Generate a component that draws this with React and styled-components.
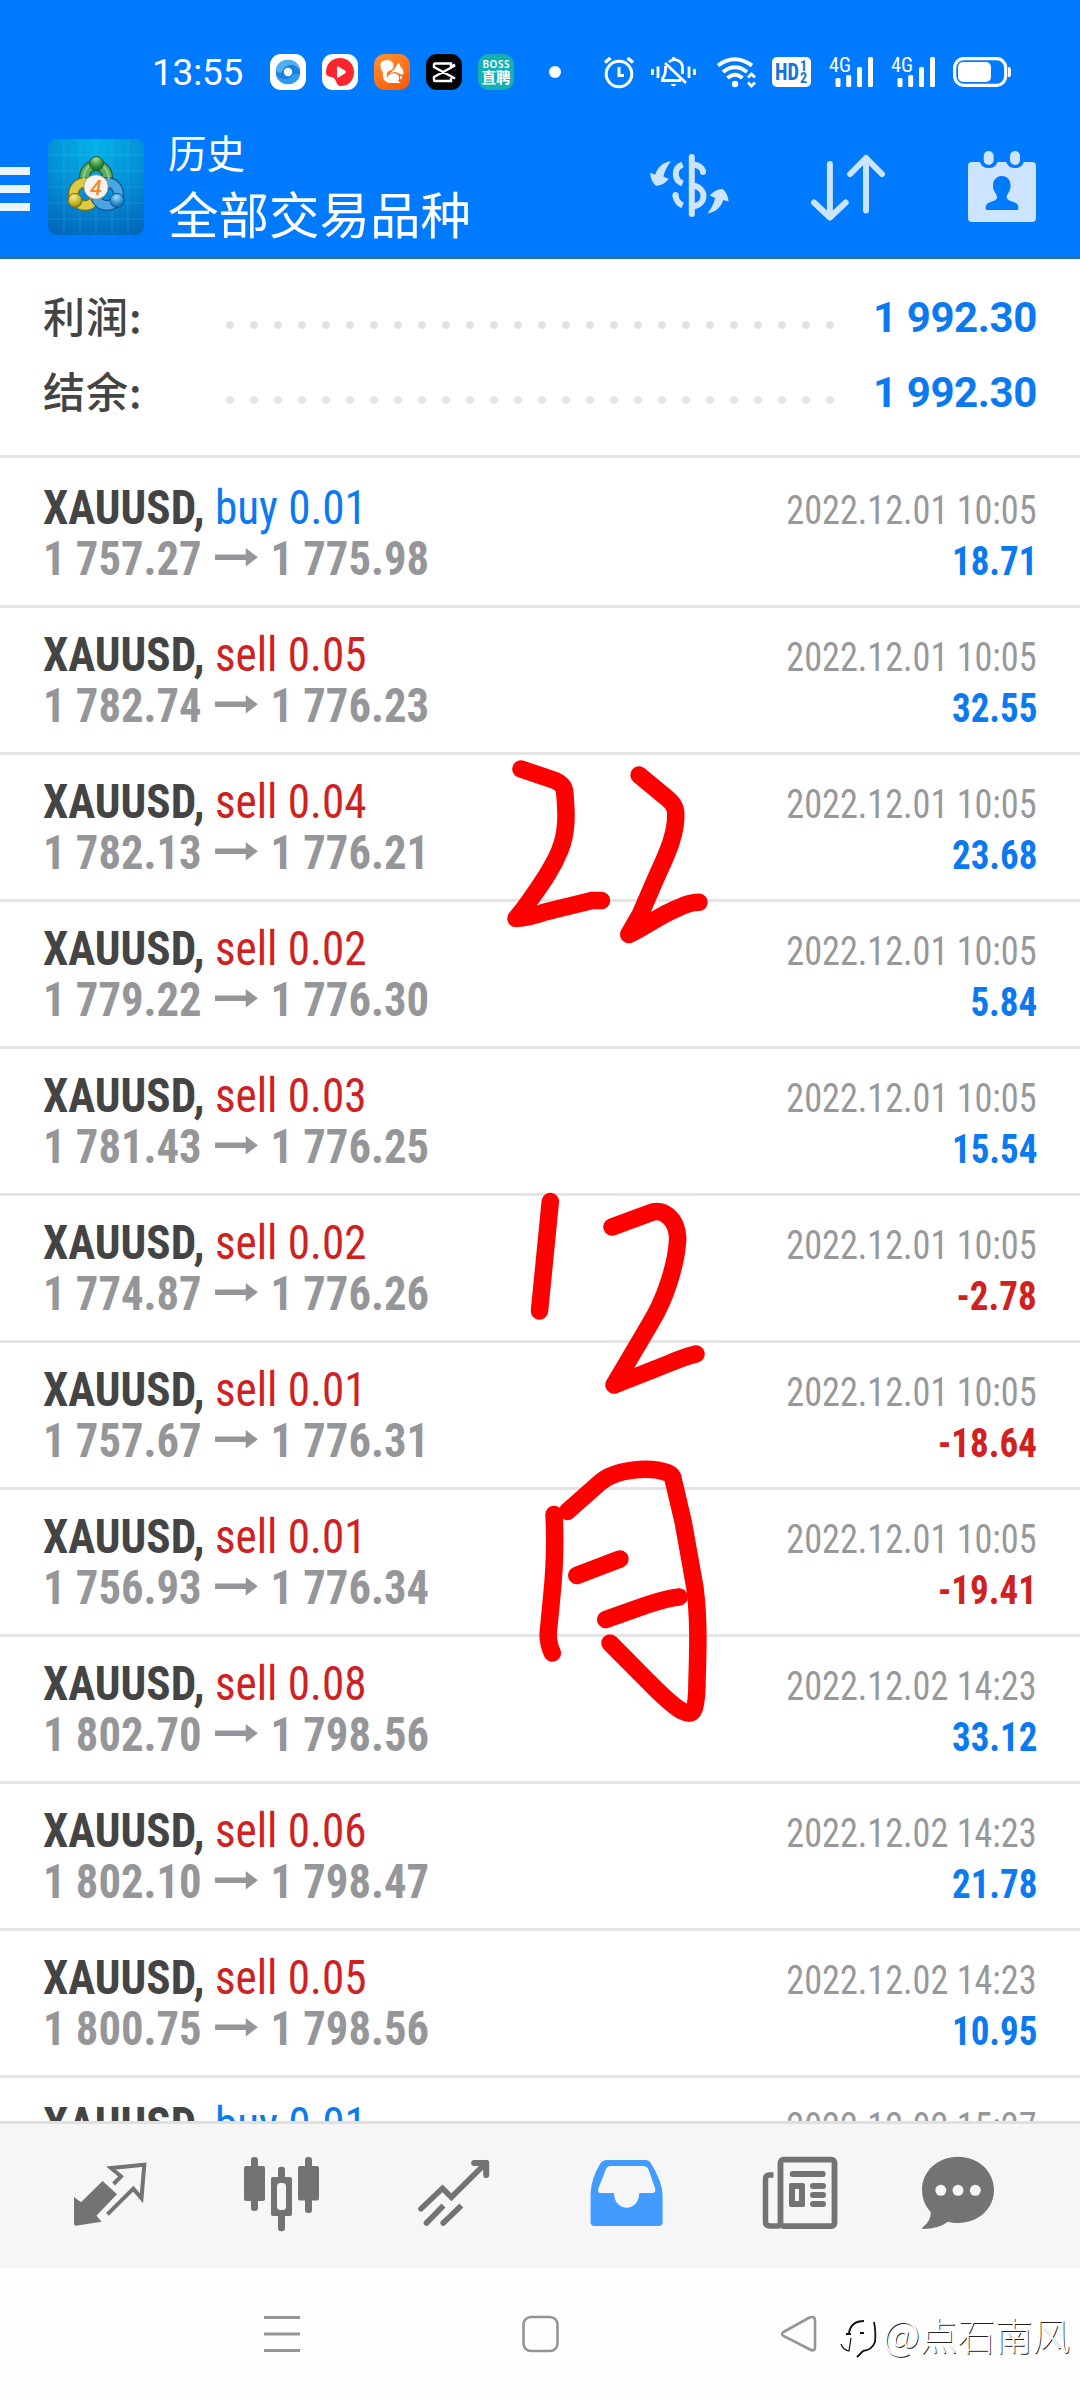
import React from 'react'
import styled, { createGlobalStyle } from 'styled-components'

const GlobalStyle = createGlobalStyle`
  * {
    box-sizing: border-box;
  }
  body {
    margin: 0;
    background: #fff;
  }
  svg {
    display: block;
    overflow: visible;
    flex: none;
  }
`
const Screen = styled.div`
  position: relative;
  display: flex;
  flex-direction: column;
  width: 1080px;
  height: 2400px;
  overflow: hidden;
  background: #fff;
  font-family: "Roboto Condensed", Roboto, "Noto Sans CJK SC", sans-serif;
`
const Header = styled.header`
  flex: none;
  height: 259px;
  background: #007aff;
  border-bottom: 3px solid #1b6fc6;
  color: #fff;
`
const StatusBar = styled.div`
  display: flex;
  align-items: flex-start;
  height: 118px;
  padding: 54px 0 0 152px;
`
const Clock = styled.span`
  width: 118px;
  font-family: Roboto, sans-serif;
  font-size: 37px;
  font-weight: 400;
  line-height: 37px;
  letter-spacing: -0.2px;
`
const AppIcons = styled.div`
  display: flex;
  gap: 16px;
`
const StatusIcon = styled.svg`
  margin-left: ${(props) => props.$gap}px;
`
const Toolbar = styled.div`
  display: flex;
  align-items: center;
  height: 138px;
`
const Menu = styled.div`
  display: flex;
  flex-direction: column;
  gap: 10px;
  width: 30px;
  margin: 4px 18px 0 0;
`
const MenuBar = styled.span`
  height: 8px;
  background: #e9f5ff;
`
const Titles = styled.div`
  flex: 1;
  margin-left: 24px;
  font-family: "Noto Sans CJK SC", sans-serif;
  font-weight: 400;
`
const SmallTitle = styled.div`
  font-size: 38.5px;
  line-height: 50px;
`
const BigTitle = styled.div`
  font-size: 50.5px;
  line-height: 72px;
`
const Actions = styled.div`
  display: flex;
  align-items: center;
  gap: 80.5px;
  margin-right: 42px;
`
const Summary = styled.section`
  flex: none;
  height: 199px;
  padding: 21px 43px 0;
  border-bottom: 3px solid #e4e4e4;
`
const SummaryRow = styled.div`
  display: flex;
  align-items: center;
  height: 75px;
`
const SummaryLabel = styled.span`
  width: 183px;
  padding-bottom: 6px;
  color: #444;
  font-family: "Noto Sans CJK SC", sans-serif;
  font-size: 42px;
  font-weight: 500;
  line-height: 75px;
  letter-spacing: 1px;
`
const Dots = styled.span`
  width: 624px;
  height: 8px;
  margin-top: 14px;
  margin-left: -8px;
  background: radial-gradient(circle at center, #e4e4e4 3.6px, transparent 4.2px) 0 0 / 24px 8px repeat-x;
`
const SummaryValue = styled.span`
  flex: 1;
  color: #0b79f0;
  font-family: Roboto, sans-serif;
  font-size: 42px;
  font-weight: 700;
  text-align: right;
  letter-spacing: -0.4px;
`
const Deals = styled.main`
  flex: none;
  height: 1663px;
  overflow: hidden;
`
const Deal = styled.div`
  height: 147px;
  padding: 21px 43px 0;
  border-top: 3px solid #e4e4e4;
  &:first-child {
    border-top-color: transparent;
  }
`
const Line = styled.div`
  display: flex;
  align-items: baseline;
  justify-content: space-between;
  height: 51px;
  line-height: 51px;
  white-space: pre;
`
const Order = styled.span`
  transform: scaleX(0.94);
  transform-origin: left;
  font-size: 48px;
`
const Symbol = styled.span`
  color: #444;
  font-weight: 700;
`
const Side = styled.span`
  color: ${(props) => (props.$buy ? '#0b79f0' : '#d0201f')};
  font-weight: 400;
`
const Prices = styled.span`
  display: flex;
  align-items: baseline;
  transform: scaleX(0.93);
  transform-origin: left;
  color: #959699;
  font-size: 48px;
  font-weight: 700;
`
const PriceArrow = styled.svg`
  margin: 0 14px;
`
const Time = styled.span`
  transform: scaleX(0.905);
  transform-origin: right;
  color: #97989b;
  font-size: 40px;
  font-weight: 400;
`
const Profit = styled.span`
  transform: scaleX(0.925);
  transform-origin: right;
  color: ${(props) => (props.$loss ? '#d0201f' : '#0b79f0')};
  font-size: 40px;
  font-weight: 700;
`
const Tabs = styled.nav`
  display: flex;
  flex: none;
  height: 147px;
  padding: 32px 0 0 24px;
  background: #f6f6f6;
  border-top: 3px solid #e0e0e0;
`
const Tab = styled.div`
  display: flex;
  justify-content: center;
  width: ${(props) => props.$width || 172}px;
  color: ${(props) => (props.$active ? '#429bff' : '#737373')};
`
const SystemNav = styled.div`
  display: flex;
  flex: 1;
  justify-content: center;
  align-items: center;
  gap: 222px;
  background: #fefefe;
`
const Marker = styled.svg`
  position: absolute;
  left: 500px;
  top: 750px;
`
const Watermark = styled.div`
  position: absolute;
  right: 10px;
  bottom: 36px;
  display: flex;
  align-items: center;
  gap: 3px;
  color: #fff;
  font-family: "Noto Sans CJK SC", sans-serif;
  font-size: 37.5px;
  font-weight: 300;
  line-height: 60px;
  text-shadow: 0.8px 0.8px 0.6px #222;
`
const WatermarkLogo = styled.svg`
  margin-top: 10px;
`
const At = styled.span`
  font-size: 41px;
`

const deals = [
  { side: 'buy 0.01', open: '1 757.27', close: '1 775.98', time: '2022.12.01 10:05', profit: '18.71' },
  { side: 'sell 0.05', open: '1 782.74', close: '1 776.23', time: '2022.12.01 10:05', profit: '32.55' },
  { side: 'sell 0.04', open: '1 782.13', close: '1 776.21', time: '2022.12.01 10:05', profit: '23.68' },
  { side: 'sell 0.02', open: '1 779.22', close: '1 776.30', time: '2022.12.01 10:05', profit: '5.84' },
  { side: 'sell 0.03', open: '1 781.43', close: '1 776.25', time: '2022.12.01 10:05', profit: '15.54' },
  { side: 'sell 0.02', open: '1 774.87', close: '1 776.26', time: '2022.12.01 10:05', profit: '-2.78' },
  { side: 'sell 0.01', open: '1 757.67', close: '1 776.31', time: '2022.12.01 10:05', profit: '-18.64' },
  { side: 'sell 0.01', open: '1 756.93', close: '1 776.34', time: '2022.12.01 10:05', profit: '-19.41' },
  { side: 'sell 0.08', open: '1 802.70', close: '1 798.56', time: '2022.12.02 14:23', profit: '33.12' },
  { side: 'sell 0.06', open: '1 802.10', close: '1 798.47', time: '2022.12.02 14:23', profit: '21.78' },
  { side: 'sell 0.05', open: '1 800.75', close: '1 798.56', time: '2022.12.02 14:23', profit: '10.95' },
  { side: 'buy 0.01', open: '', close: '', time: '2022.12.02 15:27', profit: '' },
]

const BrowserIcon = () => (
  <svg width="36" height="36" viewBox="0 0 36 36">
    <rect width="36" height="36" rx="11" fill="#fff" />
    <circle cx="18" cy="18" r="12.200" fill="#1a7fe0" />
    <path d="M6 16C8 3 27 2 30 16C24 8 16 10 13 16C11 20 8 20 6 16Z" fill="#4fb0f5" />
    <path d="M30 20C28 32 10 34 6 21C12 27 20 26 23 20Z" fill="#2f9bee" />
    <circle cx="18" cy="18" r="4.200" fill="#fff" />
  </svg>
)
const VideoIcon = () => (
  <svg width="36" height="36" viewBox="0 0 36 36">
    <rect width="36" height="36" rx="11" fill="#fff" />
    <path d="M18 4C26 4 32 10 32 18C32 26 27 32 19 32C14 32 15 27 12 24C9 22 4 24 4 18C4 10 10 4 18 4Z" fill="#fb2530" />
    <path d="M15 13.500Q15 12 16.500 12.500L23.500 17Q24.800 18 23.500 19L16.500 23.500Q15 24 15 22.500Z" fill="#fff" />
  </svg>
)
const SquirrelIcon = () => (
  <svg width="36" height="36" viewBox="0 0 36 36">
    <defs>
      <linearGradient id="orange" x1="0" y1="0" x2="0.6" y2="1">
        <stop offset="0" stopColor="#ff9433" />
        <stop offset="1" stopColor="#ff5d0a" />
      </linearGradient>
    </defs>
    <rect width="36" height="36" rx="11" fill="url(#orange)" />
    <path d="M7 14C5 8 10 6 13 6C18 6 21 10 19 14C18 17 13 16 13 20C12 24 14 26 16 29C10 28 8 24 9 18C8 17 7 16 7 14Z" fill="#fff" />
    <path d="M16 19C19 17 21 15 24 9Q26 9 26 12Q30 16 29.500 20C27 22 24 18 21 18Z" fill="#fff" />
    <path d="M13 25C13 20 20 18 24 21C26 23 25 26 24 27L27 29H18C15 29 13 28 13 25Z" fill="#fff" />
    <rect x="26" y="22" width="2" height="3" fill="#fff" />
  </svg>
)
const CutIcon = () => (
  <svg width="36" height="36" viewBox="0 0 36 36">
    <rect width="36" height="36" rx="11" fill="#050505" />
    <path
      d="M29 10.500L25 12.500V9.500H9Q8 9.500 8 11V13L29 24.500M29 11.500L8 23V25.500Q8 27 9 27H25V24"
      fill="none"
      stroke="#fff"
      strokeWidth="2.400"
    />
  </svg>
)
const BossIcon = () => (
  <svg width="36" height="36" viewBox="0 0 36 36">
    <rect width="36" height="36" rx="11" fill="#15b0b4" />
    <text x="18" y="13.500" textAnchor="middle" fontFamily="Noto Sans" fontSize="10" fontWeight="600" fill="#fff" textLength="27">
      BOSS
    </text>
    <text x="18" y="29" textAnchor="middle" fontFamily="Noto Sans CJK SC" fontSize="14.500" fontWeight="700" fill="#fff">
      直聘
    </text>
  </svg>
)
const Signal = () => (
  <StatusIcon $gap={18} width="44" height="36" viewBox="0 0 44 36" fill="#fff">
    <text x="0" y="18" fontFamily="Roboto Condensed" fontSize="20.500" fontWeight="400" textLength="22" lengthAdjust="spacingAndGlyphs">
      4G
    </text>
    <rect x="6.500" y="24" width="5" height="9" rx="1.500" />
    <rect x="17.200" y="21" width="5" height="12" rx="1.500" />
    <rect x="28" y="13" width="5" height="20" rx="1.500" />
    <rect x="39" y="3" width="5" height="30" rx="1.500" />
  </StatusIcon>
)
const Logo = () => (
  <svg width="96" height="96" viewBox="0 0 96 96">
    <defs>
      <radialGradient id="sky" cx="0.5" cy="0.05" r="1">
        <stop offset="0" stopColor="#05b2ea" />
        <stop offset="0.5" stopColor="#0291d6" />
        <stop offset="1" stopColor="#0268bd" />
      </radialGradient>
      <radialGradient id="greenHead" cx="0.45" cy="0.2" r="0.8">
        <stop offset="0" stopColor="#a5dba0" />
        <stop offset="0.6" stopColor="#34943c" />
        <stop offset="1" stopColor="#176a28" />
      </radialGradient>
      <radialGradient id="yellowHead" cx="0.4" cy="0.25" r="0.8">
        <stop offset="0" stopColor="#f6ee8a" />
        <stop offset="0.6" stopColor="#c6b32b" />
        <stop offset="1" stopColor="#85781a" />
      </radialGradient>
      <radialGradient id="blueHead" cx="0.45" cy="0.25" r="0.8">
        <stop offset="0" stopColor="#a4dcf8" />
        <stop offset="0.6" stopColor="#2c8ed4" />
        <stop offset="1" stopColor="#125b9c" />
      </radialGradient>
    </defs>
    <rect width="96" height="96" rx="8" fill="url(#sky)" />
    <path
      d="M16 0V96M32 0V96M48 0V96M64 0V96M80 0V96M0 16H96M0 32H96M0 48H96M0 64H96M0 80H96"
      stroke="#6fd0f5"
      strokeOpacity="0.2"
    />
    <g fill="none">
      <circle cx="48" cy="38" r="11.500" stroke="#1c5d2b" strokeWidth="11" />
      <circle cx="48" cy="38" r="11.500" stroke="#5fae5f" strokeWidth="8.500" />
      <circle cx="37" cy="55" r="11.500" stroke="#6f6b16" strokeWidth="11" />
      <circle cx="37" cy="55" r="11.500" stroke="#dccb45" strokeWidth="8.500" />
      <circle cx="59" cy="55" r="11.500" stroke="#10528c" strokeWidth="11" />
      <circle cx="59" cy="55" r="11.500" stroke="#4aa5e0" strokeWidth="8.500" />
      <path d="M35.500 40Q36.500 26 48 24.500Q59.500 26 61 40" stroke="#8fce8b" strokeWidth="2" />
    </g>
    <circle cx="48.500" cy="24.500" r="7" fill="url(#greenHead)" stroke="#1c5d2b" />
    <circle cx="27" cy="61.500" r="7" fill="url(#yellowHead)" stroke="#6f6b16" />
    <circle cx="69" cy="61.500" r="7" fill="url(#blueHead)" stroke="#10528c" />
    <circle cx="48" cy="48" r="12.200" fill="#f4f1ee" stroke="#8c8c80" strokeWidth="0.800" />
    <text x="48" y="55.500" textAnchor="middle" fontFamily="Roboto" fontSize="21" fontStyle="italic" fontWeight="500" fill="#f08a2c">
      4
    </text>
  </svg>
)

const App = () => {
  return (
    <Screen>
      <GlobalStyle />
      <Header>
        <StatusBar>
          <Clock>13:55</Clock>
          <AppIcons>
            <BrowserIcon />
            <VideoIcon />
            <SquirrelIcon />
            <CutIcon />
            <BossIcon />
          </AppIcons>
          <StatusIcon $gap={35} width="12" height="36" viewBox="0 0 12 36">
            <circle cx="6" cy="18" r="6" fill="#fff" />
          </StatusIcon>
          <StatusIcon $gap={43} width="30" height="36" viewBox="0 0 30 36" fill="none" stroke="#fff" strokeWidth="3">
            <circle cx="15" cy="20" r="12.800" />
            <path d="M15 13V21.500H20" />
            <path d="M1 8.500L6.500 4M29 8.500L23.500 4" strokeWidth="3.500" />
          </StatusIcon>
          <StatusIcon $gap={17} width="45" height="36" viewBox="0 0 45 36" fill="none" stroke="#fff" strokeWidth="2.800">
            <path d="M1.500 15V21M7 12.500V24M38 12.500V24M43.500 15V21" />
            <path d="M18 8C23 3.500 31.500 6 31.500 14V20M14.500 12V15Q14.500 21 11.500 24.500V26.500H30" />
            <path d="M14 9L35 29" />
            <path d="M22.500 3V6" />
            <path d="M20 30.500Q22.500 33.500 25 30.500Z" fill="#fff" strokeWidth="1" />
          </StatusIcon>
          <StatusIcon $gap={20} width="41" height="36" viewBox="0 0 41 36" fill="none" stroke="#fff" strokeWidth="4">
            <path d="M2 11.500Q18.500 -1 36 11.500" />
            <path d="M7 18Q19 8.500 31 18" />
            <path d="M11.500 24Q19 17.500 26.500 24" />
            <circle cx="19" cy="30" r="3.200" fill="#fff" stroke="none" />
            <path d="M32 23.500L35.500 20L39 23.500M32 28.500L35.500 32L39 28.500" strokeWidth="2.800" />
          </StatusIcon>
          <StatusIcon $gap={15} width="39" height="36" viewBox="0 0 39 36">
            <rect y="3" width="39" height="30" rx="5" fill="#fff" />
            <g fill="#1673d8" fontFamily="Roboto Condensed" fontWeight="700">
              <text x="3" y="26" fontSize="23" textLength="24" lengthAdjust="spacingAndGlyphs">
                HD
              </text>
              <text x="28" y="17" fontSize="14">
                1
              </text>
              <text x="28" y="28.500" fontSize="14">
                2
              </text>
            </g>
          </StatusIcon>
          <Signal />
          <Signal />
          <StatusIcon $gap={18} width="58" height="36" viewBox="0 0 58 36">
            <rect x="1.700" y="4.700" width="51" height="26.600" rx="9" fill="none" stroke="#fff" strokeWidth="3.200" />
            <rect x="5" y="8" width="33" height="20" rx="5" fill="#fff" />
            <path d="M55 13H56Q58 13 58 15.500V20.500Q58 23 56 23H55Z" fill="#fff" />
          </StatusIcon>
        </StatusBar>
        <Toolbar>
          <Menu>
            <MenuBar />
            <MenuBar />
            <MenuBar />
          </Menu>
          <Logo />
          <Titles>
            <SmallTitle>历史</SmallTitle>
            <BigTitle>全部交易品种</BigTitle>
          </Titles>
          <Actions>
            <svg width="80" height="76" viewBox="0 0 80 76" fill="none" stroke="#cce4ff" strokeWidth="6">
              <path d="M42.800 8V65" strokeLinecap="round" />
              <path d="M33.600 15.500C24.500 19 24.500 31 33.600 34.500" />
              <path d="M26.500 46C27 51 29 54.500 33.600 56.500" />
              <path d="M26.500 46V47M54 23V22" strokeLinecap="round" />
              <path d="M44 15.500C50 16 53 18.500 54 22.500" />
              <path d="M44 36.500C58 39 58 55 44 57.500" />
              <g fill="#cce4ff" stroke="none">
                <path d="M22 12.300C14 13 8 19 6.500 25.500L1 24Q2 33 7 36.700Q14 37 19.800 30L14.500 27.500Q16 20 22 12.300Z" />
                <path
                  transform="rotate(180 40.300 38.300)"
                  d="M22 12.300C14 13 8 19 6.500 25.500L1 24Q2 33 7 36.700Q14 37 19.800 30L14.500 27.500Q16 20 22 12.300Z"
                />
              </g>
            </svg>
            <svg
              width="76"
              height="76"
              viewBox="0 0 76 76"
              fill="none"
              stroke="#cce4ff"
              strokeWidth="6"
              strokeLinecap="round"
              strokeLinejoin="round"
            >
              <path d="M19.900 15V68.500M4 53.500L19.900 68.500L35.700 53.500" />
              <path d="M56 61.500V9M40.200 25L56 9L71.900 25" />
            </svg>
            <svg width="72" height="76" viewBox="0 0 72 76">
              <rect x="2" y="13" width="68" height="60" rx="4" fill="#cce4ff" />
              <rect x="13.700" y="-1" width="18" height="20" rx="8" fill="#007aff" />
              <rect x="40" y="-1" width="18" height="20" rx="8" fill="#007aff" />
              <rect x="17.700" y="2" width="10" height="14" rx="5" fill="#cce4ff" />
              <rect x="44" y="2" width="10" height="14" rx="5" fill="#cce4ff" />
              <path
                d="M35.800 27C42 27 45 32 44.500 38C44 43 41 45 40.500 48Q41 51 46 52.500Q52.300 54 52.300 58V59.500Q52.300 61 51 61H21Q19.700 61 19.700 59.500V58Q19.700 54 26 52.500Q31 51 31.200 48C31 45 27.500 43 27 38C26.500 32 30 27 35.800 27Z"
                fill="#007aff"
              />
            </svg>
          </Actions>
        </Toolbar>
      </Header>
      <Summary>
        <SummaryRow>
          <SummaryLabel>利润:</SummaryLabel>
          <Dots />
          <SummaryValue>1 992.30</SummaryValue>
        </SummaryRow>
        <SummaryRow>
          <SummaryLabel>结余:</SummaryLabel>
          <Dots />
          <SummaryValue>1 992.30</SummaryValue>
        </SummaryRow>
      </Summary>
      <Deals>
        {deals.map((deal, i) => (
          <Deal key={i}>
            <Line>
              <Order>
                <Symbol>XAUUSD, </Symbol>
                <Side $buy={deal.side.startsWith('buy')}>{deal.side}</Side>
              </Order>
              <Time>{deal.time}</Time>
            </Line>
            {deal.open && (
              <Line>
                <Prices>
                  {deal.open}
                  <PriceArrow width="46" height="27" viewBox="0 0 46 27">
                    <path d="M0 6.500H33V0L46 9.300L33 18.500V12H0Z" fill="currentColor" />
                  </PriceArrow>
                  {deal.close}
                </Prices>
                <Profit $loss={deal.profit.startsWith('-')}>{deal.profit}</Profit>
              </Line>
            )}
          </Deal>
        ))}
      </Deals>
      <Tabs>
        <Tab>
          <svg width="76" height="76" viewBox="0 0 76 76" fill="none">
            <path d="M2 41L9 46.300L30.600 25L45 38.300L24.400 59.700L29.600 65.700L4 69.700Q2 69.700 2 68Z" fill="currentColor" />
            <path
              d="M41.600 28L49 20.300L39 12L72.300 8.700L69.500 42.300L61.300 32.700L35.400 58.300"
              stroke="currentColor"
              strokeWidth="4"
            />
          </svg>
        </Tab>
        <Tab>
          <svg width="76" height="76" viewBox="0 0 76 76" fill="currentColor">
            <rect x="7" y="1" width="7" height="54" rx="3" />
            <rect y="10" width="21" height="35" rx="2" />
            <rect x="61" y="1" width="7" height="56" rx="3" />
            <rect x="54" y="10" width="21" height="34.500" rx="2" />
            <rect x="34" y="10.700" width="7" height="64.500" rx="3" />
            <rect x="27" y="21" width="21" height="39" rx="2" />
            <rect x="33" y="27" width="9" height="27" rx="3.500" fill="#f6f6f6" />
          </svg>
        </Tab>
        <Tab>
          <svg width="76" height="76" viewBox="0 0 76 76" fill="none" stroke="currentColor" strokeWidth="5.600">
            <path d="M5 52.700L26.500 32.300L35.400 41.300L70.200 6.700" strokeLinecap="round" />
            <path d="M58.200 7H70.200V19" strokeWidth="6" strokeLinecap="round" strokeLinejoin="round" />
            <path d="M10.500 67L27.500 49.500M27.200 67L45.400 49.500" />
            <path d="M10.500 67L11 66.500M27.200 67L27.700 66.500" strokeLinecap="round" />
          </svg>
        </Tab>
        <Tab $active>
          <svg width="76" height="76" viewBox="0 0 76 76" fill="currentColor">
            <path
              fillRule="evenodd"
              d="M19 4H57.500Q61 4 63 7.500Q74.600 26 74.600 40V66Q74.600 70 70.600 70H6.600Q2.600 70 2.600 66V36Q4 21 12 8Q14.500 4 19 4ZM23 10Q19.500 10 18 13L10.500 32Q9 37 12.500 37H26C26 56.500 51.200 56.500 51.200 37H64Q68.500 37 67 32L60.500 13.500Q59 10 55 10Z"
            />
          </svg>
        </Tab>
        <Tab>
          <svg width="76" height="76" viewBox="0 0 76 76" fill="none" stroke="currentColor" strokeWidth="5.800">
            <rect x="20.500" y="3.600" width="54" height="66.500" rx="3" />
            <path d="M13.500 19H9.500Q5.500 19 5.500 23V65.500Q5.500 70 10 70H20" strokeWidth="5.500" />
            <g fill="currentColor" stroke="none">
              <rect x="29.700" y="15" width="36" height="6" rx="3" />
              <path fillRule="evenodd" d="M31 27H43Q45 27 45 29V49Q45 51 43 51H31Q29 51 29 49V29Q29 27 31 27ZM35 33V45H39V33Z" />
              <rect x="50" y="27" width="16" height="6" rx="3" />
              <rect x="50" y="36" width="16" height="6" rx="3" />
              <rect x="50" y="45" width="16" height="6" rx="3" />
            </g>
          </svg>
        </Tab>
        <Tab $width={148}>
          <svg width="76" height="76" viewBox="0 0 76 76" fill="currentColor">
            <path d="M38 0.700C58 0.700 74 15 74 34C74 53 58 67 38 67Q32 67 28 65.700Q18 73 3.500 73Q1 72.500 3 71Q11 65 10.800 56.300Q2 47 2 34C2 15 18 0.700 38 0.700Z" />
            <g fill="#f6f6f6">
              <circle cx="20.800" cy="34.300" r="5.500" />
              <circle cx="38" cy="34.300" r="5.500" />
              <circle cx="55.300" cy="34.300" r="5.500" />
            </g>
          </svg>
        </Tab>
      </Tabs>
      <SystemNav>
        <svg width="36" height="38" viewBox="0 0 36 38" stroke="#959595" strokeWidth="3">
          <path d="M0 2.500H36M0 19H36M0 35.500H36" />
        </svg>
        <svg width="37" height="38" viewBox="0 0 37 38" fill="none" stroke="#959595" strokeWidth="2.600">
          <rect x="1.500" y="2" width="34" height="34" rx="7.500" />
        </svg>
        <svg width="36" height="38" viewBox="0 0 36 38" fill="none" stroke="#959595" strokeWidth="2.600">
          <path d="M2.500 17L28.500 2.500Q34 0.500 34 5.500V32Q34 37 29 34.500L2.500 21Q-0.500 19 2.500 17Z" />
        </svg>
      </SystemNav>
      {/* freehand notes drawn over the list */}
      <Marker
        width="220"
        height="980"
        viewBox="500 750 220 980"
        fill="none"
        stroke="#fe0000"
        strokeWidth="17.500"
        strokeLinecap="round"
        strokeLinejoin="round"
      >
        <path d="M521 769L555 780.500Q563 784 564.500 790C567 815 567 832 560 850C552 870 540 886 530 900Q524 909 516 918.500Q528 918 545 912L592 900.500H601.500" />
        <path d="M639 775L668 799Q675 805 675.700 812C677 835 665 858 656 878L640 915L628.700 934.500C640 930 660 915 678 908Q690 902 699 902.300" />
        <path d="M550.300 1201.500L539.500 1311" />
        <path d="M612 1227L650 1213C664 1207 677 1220 677.700 1238C677 1260 668 1290 656.700 1312C648 1328 638 1344 614 1385Q630 1379 670 1363Q684 1357 696 1354" />
        <path d="M554 1514.500C556 1550 554 1575 551.700 1597L548.500 1630Q547 1641 552.300 1653" />
        <path d="M567.300 1511.500L600 1482.500C615 1469 650 1466 668 1473Q673 1475 673.300 1480L683.300 1522.500L695 1588C699 1620 698 1650 697 1680Q697 1705 693 1711Q690 1715 682 1711C670 1704 660 1693 646.700 1680L610 1643" />
        <path d="M576.700 1575.500L620 1559" />
        <path d="M605.700 1619.500L646.700 1605Q668 1598 679 1597" />
      </Marker>
      <Watermark>
        <WatermarkLogo width="40" height="44" viewBox="0 0 40 44" fill="none" stroke="#111" strokeWidth="1.200">
          <path d="M9 17Q11 5 24 5" strokeWidth="2" />
          <path d="M6 18H11M20 17H24" strokeWidth="1.800" />
          <path d="M11 22L9 35Q3 34 1 28" />
          <path d="M34 6Q36 15 35 26Q32 34 23 35L17 41" strokeWidth="1.800" />
        </WatermarkLogo>
        <span>
          <At>@</At>点石南风
        </span>
      </Watermark>
    </Screen>
  )
}

export default App
